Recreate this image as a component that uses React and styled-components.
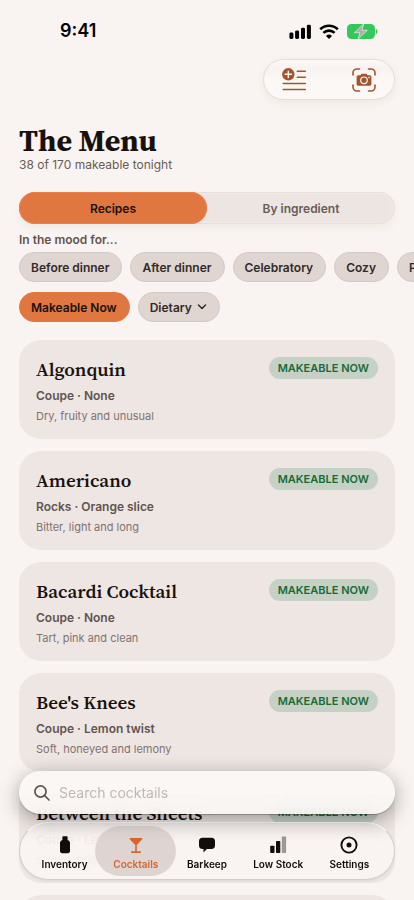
import React from "react";
import styled, { createGlobalStyle } from "styled-components";

const SERIF = '"Source Serif 4", "Source Serif Pro", "Liberation Serif", serif';

const GlobalStyle = createGlobalStyle`
  * { box-sizing: border-box; }
  body {
    margin: 0;
    background: #f9f4f1;
    color: #17110e;
    font-family: Inter, "Liberation Sans", sans-serif;
    overflow: hidden;
  }
  button, input { font: inherit; color: inherit; }
`;

const Screen = styled.div`
  height: 100vh;
  overflow: hidden;
`;

const StatusBar = styled.div`
  display: flex;
  align-items: center;
  justify-content: space-between;
  height: 59px;
  padding: 3px 36px 0 60px;
  color: #000;
`;

const Clock = styled.span`
  font-size: 18px;
  font-weight: 600;
  line-height: 22px;
`;

const StatusIcons = styled.div`
  display: flex;
  align-items: center;
  gap: 8px;
`;

const Header = styled.header`
  display: flex;
  flex-direction: column;
  padding: 0 19px;
`;

const Toolbar = styled.div`
  display: flex;
  align-self: flex-end;
  align-items: center;
  justify-content: space-between;
  width: 132px;
  height: 41px;
  padding: 0 18px;
  border-radius: 21px;
  border: 1px solid #e2dcda;
  background: linear-gradient(#fcf9f7, #f8f3f1 20%, #fcf8f6 55%, #fcf8f6);
  box-shadow: 0 3px 9px rgba(80, 50, 40, 0.06);
`;

const IconButton = styled.button`
  display: flex;
  padding: 0;
  border: 0;
  background: none;
  color: #a4532d;
`;

const Title = styled.h1`
  margin: 25px 0 0;
  font-family: ${SERIF};
  font-size: 30px;
  font-weight: 700;
  line-height: 32px;
`;

const Subtitle = styled.p`
  margin: 0;
  font-size: 12px;
  line-height: 16px;
  color: #685b56;
`;

const Segments = styled.div`
  display: grid;
  grid-template-columns: 1fr 1fr;
  height: 32px;
  margin: 19px 19px 0;
  border-radius: 16px;
  background: #ece5e2;
  box-shadow: inset 0 0 0 1px #e6dfdc, inset 0 0 0 2px #f1ebe8, 0 4px 8px rgba(80, 50, 40, 0.05);
`;

const Segment = styled.button`
  border: 0;
  border-radius: 16px;
  background: ${(p) => (p.$active ? "#e17740" : "transparent")};
  box-shadow: ${(p) => (p.$active ? "inset 0 0 0 1px #ef7f47" : "none")};
  color: ${(p) => (p.$active ? "#17110e" : "#685b56")};
  font-size: 12px;
  font-weight: 600;
`;

const MoodLabel = styled.h2`
  margin: 8px 19px 4px;
  font-size: 12px;
  font-weight: 600;
  line-height: 16px;
  color: #61544f;
`;

const ChipRow = styled.div`
  display: flex;
  gap: 8px;
  padding: 0 19px;
  margin-bottom: 10px;
  overflow: hidden;
`;

const Chip = styled.button`
  display: flex;
  flex: none;
  align-items: center;
  gap: 5px;
  height: 30px;
  padding: 0 12px 0 11px;
  border: 1px solid ${(p) => (p.$active ? "#e17740" : "#d4c8c4")};
  border-radius: 15px;
  background: ${(p) => (p.$active ? "#e17740" : "#dfd6d2")};
  color: ${(p) => (p.$active ? "#17110e" : "#332a27")};
  font-size: 12px;
  font-weight: 600;
  white-space: nowrap;
`;

const CardList = styled.main`
  display: flex;
  flex-direction: column;
  gap: 12px;
  padding: 8px 19px 0;
`;

const Card = styled.article`
  display: flex;
  justify-content: space-between;
  align-items: flex-start;
  padding: 17px 17px 15px;
  border-radius: 22px;
  background: #eee6e3;
`;

const CardName = styled.h3`
  margin: 0 0 7px;
  font-family: ${SERIF};
  font-size: 19px;
  font-weight: 600;
  line-height: 24px;
`;

const CardGlass = styled.p`
  margin: 0 0 4px;
  font-size: 12px;
  font-weight: 600;
  line-height: 16px;
  color: #61544f;
`;

const CardNote = styled.p`
  margin: 0;
  font-size: 11px;
  line-height: 16px;
  color: #80736e;
`;

const Badge = styled.span`
  padding: 0 9px;
  border-radius: 11px;
  background: #c6d1c5;
  color: #176b35;
  font-size: 11px;
  font-weight: 600;
  line-height: 22px;
`;

const Dock = styled.footer`
  position: fixed;
  left: 0;
  right: 0;
  bottom: 20px;
  display: flex;
  flex-direction: column;
  gap: 8px;
  padding: 0 19px;
`;

const SearchField = styled.label`
  display: flex;
  align-items: center;
  gap: 9px;
  height: 43px;
  padding: 0 15px;
  border-radius: 22px;
  background: linear-gradient(rgba(250, 247, 245, 0.98) 40%, rgba(249, 245, 243, 0.92));
  backdrop-filter: blur(8px);
  box-shadow: 0 1px 1px rgba(0, 0, 0, 0.25), 0 5px 20px rgba(0, 0, 0, 0.36);
  color: #61544f;
`;

const SearchInput = styled.input`
  flex: 1;
  min-width: 0;
  padding: 0;
  border: 0;
  outline: 0;
  background: none;
  font-size: 14px;
  line-height: 20px;
  &::placeholder { color: #bfb8b5; opacity: 1; }
`;

const TabBar = styled.nav`
  display: grid;
  grid-template-columns: repeat(5, 1fr);
  height: 58px;
  padding: 3px 9px;
  border: 1px solid #d3ccc9;
  border-top-color: #fff;
  border-radius: 29px;
  background: linear-gradient(rgba(241, 235, 232, 0.96), rgba(249, 244, 242, 0.95) 35%);
  box-shadow: 0 1px 3px rgba(60, 40, 30, 0.08);
`;

const Tab = styled.a`
  display: flex;
  flex-direction: column;
  align-items: center;
  justify-content: center;
  gap: 2px;
  margin: 0 -5px;
  padding-top: 3px;
  border-radius: 25px;
  background: ${(p) => (p.$active ? "#ded5d2" : "transparent")};
  color: ${(p) => (p.$active ? "#d9662f" : "#110d0c")};
  font-size: 10px;
  font-weight: 600;
  line-height: 14px;
  text-decoration: none;
  white-space: nowrap;
`;

const SignalIcon = () => (
  <svg width="22" height="15" viewBox="0 0 22 15" fill="currentColor" aria-hidden="true">
    <rect x="0.4" y="8.6" width="4" height="6.4" rx="1.4" />
    <rect x="6.1" y="6.4" width="4" height="8.6" rx="1.4" />
    <rect x="12" y="3.7" width="4" height="11.3" rx="1.4" />
    <rect x="17.9" y="0.7" width="4" height="14.3" rx="1.4" />
  </svg>
);

const WifiIcon = () => (
  <svg width="20" height="15" viewBox="0 0 20 15" fill="none" stroke="currentColor" strokeWidth="2.6" aria-hidden="true">
    <path d="M1.2 5.2a12.8 12.8 0 0 1 17.6 0M4.4 8.9a8 8 0 0 1 11.2 0" />
    <path d="M10 15 7 12a4.3 4.3 0 0 1 6 0Z" fill="currentColor" stroke="none" />
  </svg>
);

const BatteryIcon = () => (
  <svg width="31" height="15" viewBox="0 0 31 15" aria-hidden="true">
    <rect width="28" height="15" rx="4.5" fill="#34c759" />
    <path d="M29 5c1.800.6 1.800 4.400 0 5Z" fill="#34c759" />
    <path d="M16.6 0 7.4 8.7h5.4L11.2 15l9.2-8.7H15Z" fill="#aeaeac" stroke="#e9f0e4" strokeWidth="0.7" strokeLinejoin="round" />
  </svg>
);

const AddListIcon = () => (
  <svg width="25" height="23" viewBox="0 0 25 23" fill="none" stroke="currentColor" strokeWidth="1.5" strokeLinecap="round" aria-hidden="true">
    <path d="M15.3 3.2H23.3M15.3 9.3H23.3M1.2 15.4H23.3M1.2 21.6H23.3" />
    <circle cx="6.3" cy="6.3" r="6.2" fill="currentColor" stroke="none" />
    <path d="M6.3 3.1v6.4M3.1 6.3h6.4" stroke="#fbf6f4" strokeWidth="1.4" />
  </svg>
);

const ScanIcon = () => (
  <svg width="24" height="24" viewBox="0 0 24 24" fill="none" stroke="currentColor" strokeWidth="1.6" strokeLinecap="round" aria-hidden="true">
    <path d="M1 7V5a4 4 0 0 1 4-4h2.5M16.5 1H19a4 4 0 0 1 4 4v2M23 17v2a4 4 0 0 1-4 4h-2.5M7.5 23H5a4 4 0 0 1-4-4v-2" />
    <path d="M6.3 7.3h2.2l1-1.5h5l1 1.5h2.2c1 0 1.7.7 1.7 1.7v7c0 1-.7 1.7-1.7 1.7H6.3c-1 0-1.7-.7-1.7-1.7V9c0-1 .7-1.7 1.7-1.7Z" fill="currentColor" stroke="none" />
    <circle cx="12" cy="12.3" r="3.3" stroke="#fbf6f4" strokeWidth="1.2" />
    <circle cx="17" cy="9.5" r="0.8" fill="#fbf6f4" stroke="none" />
  </svg>
);

const ChevronIcon = () => (
  <svg width="10" height="6" viewBox="0 0 10 6" fill="none" stroke="currentColor" strokeWidth="1.5" strokeLinecap="round" strokeLinejoin="round" aria-hidden="true">
    <path d="m1.5 1 3.5 3.5L8.5 1" />
  </svg>
);

const SearchIcon = () => (
  <svg width="16" height="16" viewBox="0 0 16 16" fill="none" stroke="currentColor" strokeWidth="1.7" strokeLinecap="round" aria-hidden="true">
    <circle cx="6.5" cy="6.5" r="5.6" />
    <path d="m10.7 10.7 4.3 4.3" />
  </svg>
);

const TabIcon = ({ children }) => (
  <svg width="20" height="20" viewBox="0 0 20 20" fill="currentColor" aria-hidden="true">{children}</svg>
);

const tabs = [
  { label: "Inventory", icon: <path d="M8.200 1.300h3.600c.5 0 .8.300.8.800v3c1.600.6 2.400 1.500 2.400 3V16c0 1.400-.8 2.200-2.200 2.200H7.200C5.800 18.200 5 17.400 5 16V8.100c0-1.500.8-2.400 2.400-3v-3c0-.5.3-.8.8-.8Z" /> },
  { label: "Cocktails", active: true, icon: <path d="M3.700 3h12.600v1.200l-5.500 5.800v6.300h3.700c.6 0 .6 1.600 0 1.600h-9c-.6 0-.6-1.600 0-1.600h3.700V10L3.700 4.200Z" /> },
  { label: "Barkeep", icon: <path d="M5.500 2.700h9c2.300 0 3.500 1.200 3.500 3.500v4.300c0 2.300-1.200 3.500-3.500 3.500h-4.600l-3.400 3.400V14h-1C3.200 14 2 12.800 2 10.500V6.200c0-2.300 1.200-3.500 3.500-3.500Z" /> },
  {
    label: "Low Stock",
    icon: (
      <>
        <rect x="2.2" y="10.7" width="4.3" height="7.3" rx="0.8" />
        <rect x="8" y="6" width="4.3" height="12" rx="0.8" />
        <rect x="13.8" y="1.5" width="4.3" height="16.5" rx="0.8" opacity="0.4" />
      </>
    ),
  },
  {
    label: "Settings",
    icon: (
      <>
        <circle cx="10" cy="10" r="7.6" fill="none" stroke="currentColor" strokeWidth="1.9" />
        <circle cx="10" cy="10" r="2.5" />
      </>
    ),
  },
];

const moods = ["Before dinner", "After dinner", "Celebratory", "Cozy", "Party"];

const cocktails = [
  { name: "Algonquin", glass: "Coupe · None", note: "Dry, fruity and unusual" },
  { name: "Americano", glass: "Rocks · Orange slice", note: "Bitter, light and long" },
  { name: "Bacardi Cocktail", glass: "Coupe · None", note: "Tart, pink and clean" },
  { name: "Bee's Knees", glass: "Coupe · Lemon twist", note: "Soft, honeyed and lemony" },
  { name: "Between the Sheets", glass: "Coupe · Lemon twist", note: "Strong, bright and citrusy" },
  { name: "Black Russian", glass: "Rocks · None", note: "Rich, dark and sweet" },
];

export default function App() {
  return (
    <Screen>
      <GlobalStyle />
      <StatusBar>
        <Clock>9:41</Clock>
        <StatusIcons>
          <SignalIcon />
          <WifiIcon />
          <BatteryIcon />
        </StatusIcons>
      </StatusBar>
      <Header>
        <Toolbar>
          <IconButton aria-label="Add recipe"><AddListIcon /></IconButton>
          <IconButton aria-label="Scan"><ScanIcon /></IconButton>
        </Toolbar>
        <Title>The Menu</Title>
        <Subtitle>38 of 170 makeable tonight</Subtitle>
      </Header>
      <Segments>
        <Segment $active aria-pressed="true">Recipes</Segment>
        <Segment aria-pressed="false">By ingredient</Segment>
      </Segments>
      <MoodLabel>In the mood for...</MoodLabel>
      <ChipRow>
        {moods.map((mood) => <Chip key={mood}>{mood}</Chip>)}
      </ChipRow>
      <ChipRow>
        <Chip $active>Makeable Now</Chip>
        <Chip>Dietary <ChevronIcon /></Chip>
      </ChipRow>
      <CardList>
        {cocktails.map((c) => (
          <Card key={c.name}>
            <div>
              <CardName>{c.name}</CardName>
              <CardGlass>{c.glass}</CardGlass>
              <CardNote>{c.note}</CardNote>
            </div>
            <Badge>MAKEABLE NOW</Badge>
          </Card>
        ))}
      </CardList>
      <Dock>
        <SearchField>
          <SearchIcon />
          <SearchInput type="search" placeholder="Search cocktails" aria-label="Search cocktails" />
        </SearchField>
        <TabBar>
          {tabs.map((t) => (
            <Tab key={t.label} href="#" $active={t.active} aria-current={t.active ? "page" : undefined}>
              <TabIcon>{t.icon}</TabIcon>
              {t.label}
            </Tab>
          ))}
        </TabBar>
      </Dock>
    </Screen>
  );
}
